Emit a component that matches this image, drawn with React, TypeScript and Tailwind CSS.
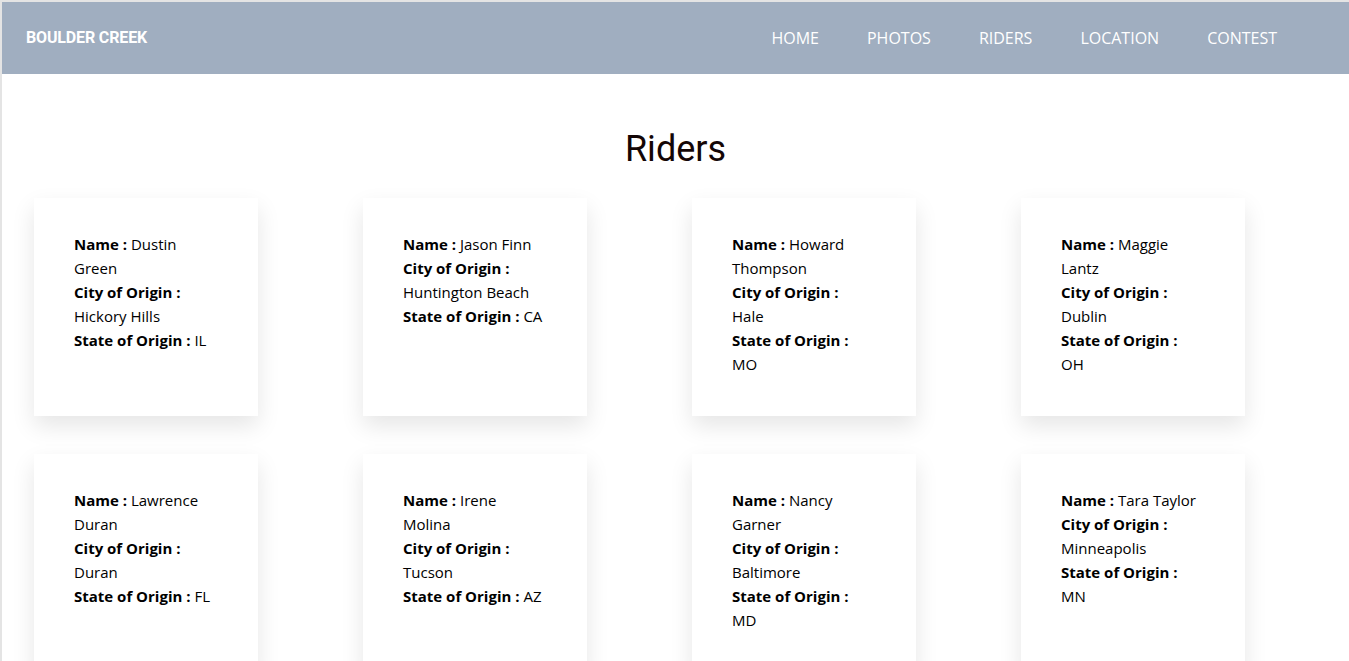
const riders = [
  { name: 'Dustin Green', city: 'Hickory Hills', state: 'IL' },
  { name: 'Jason Finn', city: 'Huntington Beach', state: 'CA' },
  { name: 'Howard Thompson', city: 'Hale', state: 'MO' },
  { name: 'Maggie Lantz', city: 'Dublin', state: 'OH' },
  { name: 'Lawrence Duran', city: 'Duran', state: 'FL' },
  { name: 'Irene Molina', city: 'Tucson', state: 'AZ' },
  { name: 'Nancy Garner', city: 'Baltimore', state: 'MD' },
  { name: 'Tara Taylor', city: 'Minneapolis', state: 'MN' },
];

const links = ['HOME', 'PHOTOS', 'RIDERS', 'LOCATION', 'CONTEST'];

function RiderCard({ name, city, state }: { name: string; city: string; state: string }) {
  return (
    <div className="w-[224px] bg-white pt-[34px] pb-[40px] pl-[40px] pr-[44px] shadow-[0_10px_22px_rgba(0,0,0,0.1)]">
      <p className="text-[15px] leading-[24px] text-black">
        <b>Name :</b> {name}
        <br />
        <b>City of Origin :</b> {city}
        <br />
        <b>State of Origin :</b> {state}
      </p>
    </div>
  );
}

export default function App() {
  return (
    <div className="min-h-[661px] border-l-2 border-t-2 border-[#e4e4e4] bg-white font-['Open_Sans',sans-serif]">
      <nav className="flex h-[72px] items-center justify-between bg-[#a0aec0] pl-6 pr-[72px]">
        <span className="font-['Roboto',sans-serif] text-base font-bold tracking-[-0.15px] text-white">BOULDER CREEK</span>
        <ul className="flex gap-12 text-base text-white">
          {links.map((l) => (
            <li key={l}>
              <a href="#">{l}</a>
            </li>
          ))}
        </ul>
      </nav>

      <h1 className="mt-[51px] text-center font-['Roboto',sans-serif] text-4xl leading-[48px] text-[#140606]">Riders</h1>

      <div className="mt-[25px] grid grid-cols-[repeat(4,329px)] gap-y-[38px] pl-[32px]">
        {riders.map((r) => (
          <RiderCard key={r.name} {...r} />
        ))}
      </div>
    </div>
  );
}
